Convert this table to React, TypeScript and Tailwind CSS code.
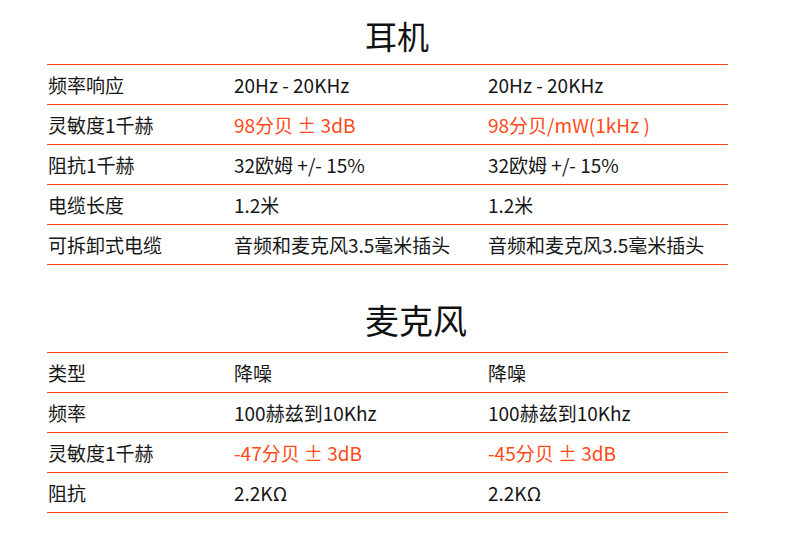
export default function App() {
  const headphone = [
    { label: "频率响应", a: "20Hz - 20KHz", b: "20Hz - 20KHz" },
    { label: "灵敏度1千赫", a: "98分贝 ± 3dB", b: "98分贝/mW(1kHz )", red: true },
    { label: "阻抗1千赫", a: "32欧姆 +/- 15%", b: "32欧姆 +/- 15%" },
    { label: "电缆长度", a: "1.2米", b: "1.2米" },
    { label: "可拆卸式电缆", a: "音频和麦克风3.5毫米插头", b: "音频和麦克风3.5毫米插头" },
  ];

  const mic = [
    { label: "类型", a: "降噪", b: "降噪" },
    { label: "频率", a: "100赫兹到10Khz", b: "100赫兹到10Khz" },
    { label: "灵敏度1千赫", a: "-47分贝 ± 3dB", b: "-45分贝 ± 3dB", red: true },
    { label: "阻抗", a: "2.2KΩ", b: "2.2KΩ" },
  ];

  const renderRows = (rows: { label: string; a: string; b: string; red?: boolean }[]) => (
    <div className="border-t border-[#ff4a17]">
      {rows.map((r) => (
        <div key={r.label} className="flex h-10 items-center border-b border-[#ff4a17] pt-[2px] text-[19px]">
          <div className="w-[187px] pl-[1px] text-[#161616]">{r.label}</div>
          <div className={`w-[254px] ${r.red ? "text-[#ff4a17]" : "text-[#161616]"}`}>{r.a}</div>
          <div className={`flex-1 ${r.red ? "text-[#ff4a17]" : "text-[#161616]"}`}>{r.b}</div>
        </div>
      ))}
    </div>
  );

  return (
    <div
      className="h-[538px] w-[790px] overflow-hidden bg-white"
      style={{ fontFamily: '"Noto Sans CJK SC", "Noto Sans", sans-serif' }}
    >
      <div className="ml-[47px] w-[681px] pt-[15px]">
        {/* 耳机 */}
        <div className="mb-[9px] h-10 pl-[318px] text-[32px] leading-[40px] text-[#111]">耳机</div>
        {renderRows(headphone)}

        {/* 麦克风 */}
        <div className="mb-[12px] mt-[35px] h-10 pl-[318px] text-[34px] leading-[40px] text-[#111]">麦克风</div>
        {renderRows(mic)}
      </div>
    </div>
  );
}
